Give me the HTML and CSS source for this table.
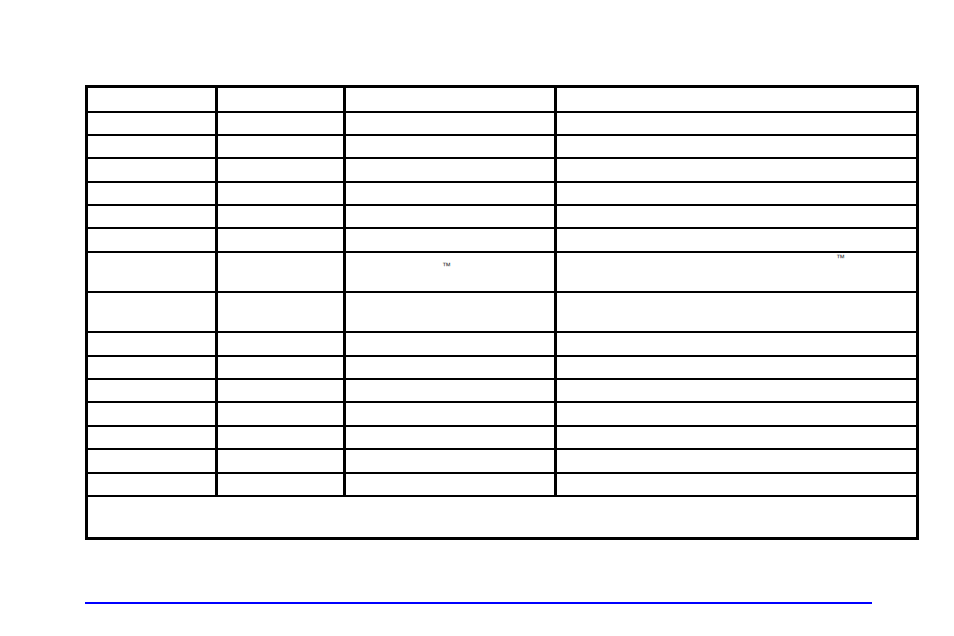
FILE: index.html
```html
<!DOCTYPE html>
<html>
<head>
<meta charset="utf-8">
<link rel="stylesheet" href="styles.css">
</head>
<body>
<div class="page">
  <div class="grid">
    <div class="c"></div><div class="c"></div><div class="c"></div><div class="c"></div>
    <div class="c"></div><div class="c"></div><div class="c"></div><div class="c"></div>
    <div class="c"></div><div class="c"></div><div class="c"></div><div class="c"></div>
    <div class="c"></div><div class="c"></div><div class="c"></div><div class="c"></div>
    <div class="c"></div><div class="c"></div><div class="c"></div><div class="c"></div>
    <div class="c"></div><div class="c"></div><div class="c"></div><div class="c"></div>
    <div class="c"></div><div class="c"></div><div class="c"></div><div class="c"></div>
    <div class="c"></div><div class="c"></div><div class="c tm3"><span class="tm">™</span></div><div class="c tm4"><span class="tm">™</span></div>
    <div class="c"></div><div class="c"></div><div class="c"></div><div class="c"></div>
    <div class="c"></div><div class="c"></div><div class="c"></div><div class="c"></div>
    <div class="c"></div><div class="c"></div><div class="c"></div><div class="c"></div>
    <div class="c"></div><div class="c"></div><div class="c"></div><div class="c"></div>
    <div class="c"></div><div class="c"></div><div class="c"></div><div class="c"></div>
    <div class="c"></div><div class="c"></div><div class="c"></div><div class="c"></div>
    <div class="c"></div><div class="c"></div><div class="c"></div><div class="c"></div>
    <div class="c"></div><div class="c"></div><div class="c"></div><div class="c"></div>
    <div class="c full"></div>
  </div>
  <div class="rule"></div>
</div>
</body>
</html>
```
FILE: styles.css
```css
html, body {
  margin: 0;
  padding: 0;
  background: #ffffff;
  font-family: "Liberation Sans", Arial, sans-serif;
}
.page {
  padding: 85px 0 0 85px;
}
.grid {
  display: grid;
  width: 834px;
  box-sizing: border-box;
  background: #000000;
  padding: 3px;
  column-gap: 3px;
  row-gap: 2px;
  grid-template-columns: 127px 125px 208px 359px;
  grid-template-rows: 23px 21px 21px 22px 21px 21px 22px 38px 38px 22px 21px 21px 22px 21px 22px 21px 40px;
}
.c {
  background: #ffffff;
}
.full {
  grid-column: 1 / -1;
}
.tm {
  display: block;
  font-size: 9px;
  line-height: 9px;
  color: #333333;
}
.tm3 {
  padding: 9px 0 0 96px;
}
.tm4 {
  padding: 1px 0 0 279px;
}
.rule {
  margin-top: 62px;
  width: 787px;
  height: 2px;
  background: #0000ff;
}
```
